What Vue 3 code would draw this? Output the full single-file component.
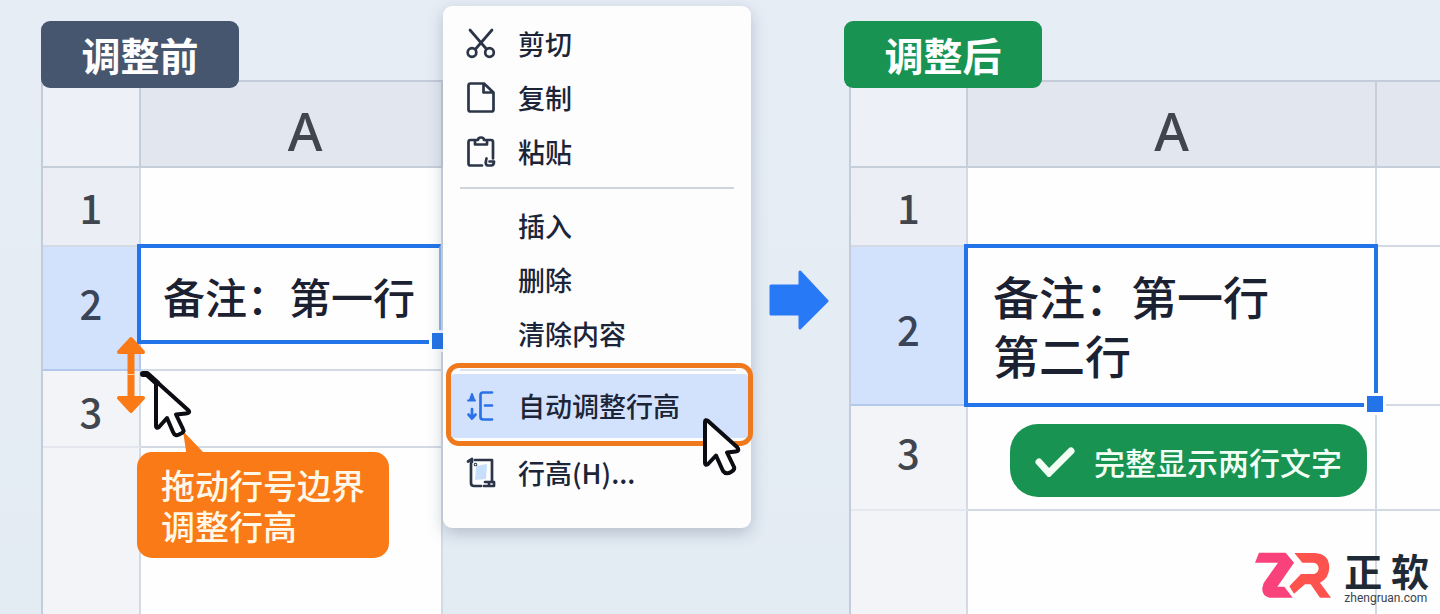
<script setup>
const editItems = [
  { label: '剪切', icon: 'cut' },
  { label: '复制', icon: 'copy' },
  { label: '粘贴', icon: 'paste' },
]
const cellItems = ['插入', '删除', '清除内容']
</script>

<template>
  <main class="board">
    <section class="pane">
      <h2 class="tag tag-before">调整前</h2>
      <table class="sheet sheet-before">
        <colgroup>
          <col class="col-num" />
          <col />
        </colgroup>
        <thead>
          <tr>
            <td class="corner"></td>
            <th scope="col">A</th>
          </tr>
        </thead>
        <tbody>
          <tr class="row-1">
            <th scope="row">1</th>
            <td></td>
          </tr>
          <tr class="row-2">
            <th scope="row">2</th>
            <td class="active">
              <div class="selection">备注：第一行<i class="handle"></i></div>
            </td>
          </tr>
          <tr class="row-3">
            <th scope="row">3</th>
            <td></td>
          </tr>
          <tr class="row-rest">
            <th></th>
            <td></td>
          </tr>
        </tbody>
      </table>
      <svg class="resize" viewBox="0 0 30 78" aria-hidden="true">
        <path d="M15 3 27 16H3ZM15 75 27 62H3Z" fill="#f97a16" stroke="#f97a16" stroke-width="4" stroke-linejoin="round" />
        <path d="M15 14V64" stroke="#f97a16" stroke-width="7" />
        <path d="M11 38.500H19" stroke="#fbd0a8" stroke-width="1" />
      </svg>
      <p class="hint">
        <svg class="hint-tail" viewBox="0 0 24 24" aria-hidden="true">
          <path d="M1 0 21 21V24H4V20Z" fill="#f97a16" />
        </svg>
        拖动行号边界<br />调整行高
      </p>
      <svg class="pointer-drag" viewBox="0 0 54 70" aria-hidden="true">
        <path d="M17 15V57Q17 60 20 58L28 49 34 63Q36 68 41 65 46 63 44 60L37 45.500 47 44.500Q52 44 49 41L19 14Z" fill="#fff" stroke="#0b0d12" stroke-width="4" stroke-linejoin="round" />
        <path d="M4 5 8 5 18 14" fill="none" stroke="#0b0d12" stroke-width="6" stroke-linejoin="round" stroke-linecap="round" />
      </svg>
    </section>

    <nav class="menu" aria-label="单元格菜单">
      <button v-for="item in editItems" :key="item.label" type="button" class="item">
        <svg v-if="item.icon === 'cut'" class="icon" viewBox="0 0 30 32" aria-hidden="true">
          <path d="M4 2 20 20.500M26 2 10 20.500" />
          <circle cx="6" cy="24.500" r="4.300" />
          <circle cx="23.500" cy="24.500" r="4.300" />
        </svg>
        <svg v-else-if="item.icon === 'copy'" class="icon" viewBox="0 0 30 32" aria-hidden="true">
          <path d="M4.500 1.500H18L27.500 10.500V27.500Q27.500 29.500 25.500 29.500H4.500Q2.500 29.500 2.500 27.500V3.500Q2.500 1.500 4.500 1.500ZM17.500 2V10.500H27" />
        </svg>
        <svg v-else class="icon" viewBox="0 0 30 32" aria-hidden="true">
          <path d="M9 4H4.500Q2.500 4 2.500 6V27.500Q2.500 29.500 4.500 29.500H16M21 4H25Q27 4 27 6V22.500M20.500 22.500Q18.500 29.500 22 29.500H25.500Q28 29 28 25.500H23.500M9 4V8.500H21V4H18Q18 1.500 15 1.500T12 4Z" />
        </svg>
        <span>{{ item.label }}</span>
      </button>
      <hr class="rule rule-top" />
      <button v-for="label in cellItems" :key="label" type="button" class="item">
        <span class="icon"></span>
        <span>{{ label }}</span>
      </button>
      <div class="focus">
        <hr class="rule rule-focus" />
        <button type="button" class="item item-on">
          <svg class="icon icon-blue" viewBox="0 0 30 32" aria-hidden="true">
            <path d="M26 2.500H17Q14.500 2.500 14.500 5V27Q14.500 29.500 17 29.500H26M19 15.500H26M6 19V28M2.500 24.500 6 28.500 9.500 24.500" />
            <path d="M6 4 8 9.500H4ZM2 10.500H9" fill="#2a72e8" stroke-width="2" />
          </svg>
          <span>自动调整行高</span>
        </button>
      </div>
      <button type="button" class="item item-last">
        <svg class="icon" viewBox="0 0 30 32" aria-hidden="true">
          <path d="M10 9 21 7 20 22 9 23Z" fill="#c7dffc" stroke="none" />
          <path d="M2 4.500 6 2V5M9 3H26V25M5 6V26Q5 29 8 29H15M19 25H28V29H18M23 25V29" />
          <circle cx="9.500" cy="7.500" r="0.500" />
        </svg>
        <span>行高(H)...</span>
      </button>
      <svg class="pointer-menu" viewBox="0 0 40 60" aria-hidden="true">
        <path d="M3 4V45Q3 48 6 46L14 37.500 21 53Q24 57 29 54 33 52 32 49L25 34.500 34 33.500Q38 33 35 29L6 3Q3 1 3 4Z" fill="#fff" stroke="#0b0d12" stroke-width="4" stroke-linejoin="round" />
      </svg>
    </nav>

    <div class="between">
      <svg class="arrow" viewBox="0 0 60 60" aria-hidden="true">
        <path d="M2 16H31V2L58 31 31 58V44H2Z" fill="#2879f6" stroke="#2879f6" stroke-width="3" stroke-linejoin="round" />
      </svg>
    </div>

    <section class="pane">
      <h2 class="tag tag-after">调整后</h2>
      <table class="sheet sheet-after">
        <colgroup>
          <col class="col-num" />
          <col class="col-a" />
          <col />
        </colgroup>
        <thead>
          <tr>
            <td class="corner"></td>
            <th scope="col">A</th>
            <th></th>
          </tr>
        </thead>
        <tbody>
          <tr class="row-1">
            <th scope="row">1</th>
            <td></td>
            <td></td>
          </tr>
          <tr class="row-2">
            <th scope="row">2</th>
            <td class="active">
              <div class="selection">备注：第一行<br />第二行<i class="handle"></i></div>
            </td>
            <td></td>
          </tr>
          <tr class="row-3">
            <th scope="row">3</th>
            <td class="active">
              <p class="done">
                <svg class="check" viewBox="0 0 40 30" aria-hidden="true">
                  <path d="M4 15 14 26 36 4" fill="none" stroke="#f2fff5" stroke-width="7" stroke-linecap="round" />
                </svg>
                完整显示两行文字
              </p>
            </td>
            <td></td>
          </tr>
          <tr class="row-rest">
            <th></th>
            <td></td>
            <td></td>
          </tr>
        </tbody>
      </table>
      <footer class="brand">
        <svg class="brand-mark" viewBox="0 0 228 138" aria-hidden="true">
          <path d="M12 2H92L117 32 67 104H88L113 137H44Q20 132 22 108L26 93 69 32H0Z" fill="#f9427b" />
          <path d="M118 3H180Q222 6 223 46 222 80 195 92L228 137H195L167 97H150L117 125 103 103 138 66H178Q191 62 191 48 189 33 175 32H142Z" fill="#fd524d" />
        </svg>
        <div>
          <strong>正 软</strong>
          <small>zhengruan.com</small>
        </div>
      </footer>
    </section>
  </main>
</template>

<style>
body {
  margin: 0;
  background: #e5ecf4;
}
</style>

<style scoped>
.board {
  display: grid;
  grid-template-columns: minmax(0, 402fr) 308px minmax(0, 98fr) minmax(0, 591fr);
  box-sizing: border-box;
  min-height: 100vh;
  padding-left: 41px;
  overflow: hidden;
  background: linear-gradient(180deg, #e6edf5, #e3ebf3);
  color: #1b2130;
  font-family: "Noto Sans CJK SC", "Noto Sans", sans-serif;
}

.pane {
  position: relative;
  padding-top: 80px;
}

.tag {
  position: absolute;
  top: 21px;
  left: 0;
  z-index: 2;
  box-sizing: border-box;
  width: 198px;
  margin: 0;
  border-radius: 9px;
  color: #fff;
  font-size: 39px;
  font-weight: 700;
  line-height: 67px;
  text-align: center;
}

.tag-before {
  background: #45566e;
}

.tag-after {
  left: -5px;
  background: #189351;
}

.sheet {
  width: 100%;
  height: calc(100vh - 80px);
  border-spacing: 0;
  border-top: 2px solid #c3ccd8;
  border-left: 2px solid #c3ccda;
  table-layout: fixed;
}

.sheet th,
.sheet td {
  box-sizing: border-box;
  padding: 0;
  border-right: 2px solid #d3dae3;
  border-bottom: 2px solid #d3dae3;
  background: #fefefe;
}

.sheet th {
  color: #41454e;
  font-size: 40px;
  font-weight: 500;
  line-height: 1;
}

.sheet thead th {
  height: 86px;
  padding-top: 12px;
  border-color: #c6ced9;
  background: #e2e7ef;
  font-family: "Noto Sans", sans-serif;
  font-size: 53px;
}

.sheet .corner {
  border-color: #c6ced9;
  background: #edf0f6;
}

.sheet-before thead th {
  padding-left: 28px;
}

.sheet-after th:last-child,
.sheet-after td:last-child {
  border-right: 0;
}

.sheet .row-1 th {
  height: 79px;
  background: #ebeef5;
}

.sheet .row-2 th {
  border-color: #b4c8ec;
  background: #d3e2fc;
  color: #3a4458;
}

.sheet .row-3 th,
.sheet .row-rest th {
  border-bottom-color: #e4e8ee;
  background: #f3f4f7;
}

.sheet-before .col-num {
  width: 98px;
}

.sheet-before .row-2 {
  height: 124px;
}

.sheet-before .row-2 th {
  padding-bottom: 10px;
}

.sheet-before .row-3 {
  height: 77px;
}

.sheet-before .row-3 th {
  padding-top: 4px;
}

.sheet-after .col-num {
  width: 117px;
}

.sheet-after .col-a {
  width: 409px;
}

.sheet-after .row-2 {
  height: 159px;
}

.sheet-after .row-2 th {
  padding-top: 6px;
}

.sheet-after .row-3 {
  height: 105px;
}

.sheet-after .row-3 th {
  padding-bottom: 12px;
}

.sheet .row-rest th,
.sheet .row-rest td {
  border-bottom: 0;
}

.active {
  position: relative;
}

.selection {
  position: absolute;
  inset: -3px 0 auto -4px;
  z-index: 1;
  box-sizing: border-box;
  height: 100px;
  padding: 0 22px;
  border: 4px solid #2374e8;
  border-right: 2px solid #8fb4f0;
  background: #fefefe;
  font-size: 42px;
  font-weight: 500;
  line-height: 96px;
  white-space: nowrap;
}

.sheet-after .selection {
  right: -3px;
  height: 163px;
  padding: 18px 25px;
  border-right: 4px solid #2374e8;
  font-size: 46px;
  line-height: 59px;
}

.handle {
  position: absolute;
  right: -12px;
  bottom: -12px;
  width: 16px;
  height: 16px;
  border: 3px solid #fefefe;
  background: #2374e8;
}

.resize {
  position: absolute;
  top: 336px;
  left: 75px;
  z-index: 2;
  width: 30px;
  height: 78px;
}

.hint {
  position: absolute;
  top: 452px;
  left: 96px;
  z-index: 2;
  box-sizing: border-box;
  width: 252px;
  margin: 0;
  padding: 12px 24px 12px;
  border-radius: 15px;
  background: #f97a16;
  color: #fff8e8;
  font-size: 34px;
  font-weight: 500;
  line-height: 41px;
  white-space: nowrap;
}

.hint-tail {
  position: absolute;
  top: -21px;
  left: 45px;
  width: 24px;
  height: 24px;
}

.pointer-drag {
  position: absolute;
  top: 369px;
  left: 98px;
  z-index: 3;
  width: 54px;
  height: 70px;
}

.menu {
  position: relative;
  z-index: 4;
  align-self: start;
  box-sizing: border-box;
  margin-top: 6px;
  padding: 12px 0 27px;
  border-radius: 9px;
  background: #fdfdfe;
  box-shadow: 0 5px 16px rgba(70, 90, 115, 0.3);
}

.item {
  display: flex;
  align-items: center;
  gap: 22px;
  width: 100%;
  height: 54px;
  padding: 0 23px 2px;
  border: 0;
  background: none;
  color: #1c2538;
  font: 500 27px/52px "Noto Sans CJK SC", "Noto Sans", sans-serif;
  text-align: left;
  white-space: nowrap;
}

.icon {
  flex: none;
  width: 30px;
  height: 32px;
  fill: none;
  stroke: #2b3547;
  stroke-width: 2.700;
  stroke-linecap: round;
  stroke-linejoin: round;
}

.icon-blue {
  stroke: #2a72e8;
}

.rule {
  height: 2px;
  margin: 7px 17px 11px;
  border: 0;
  background: #ced5dd;
}

.focus {
  box-sizing: border-box;
  margin: 1px -2px 1px 3px;
  padding-bottom: 3px;
  border: 5px solid #ee7a1d;
  border-radius: 13px;
  background: #fdfdfe;
}

.rule-focus {
  margin: 1px 12px 3px 9px;
  background: #dde2ea;
}

.item-on {
  height: 64px;
  padding: 0 15px;
  border-radius: 4px;
  background: #d3e2fc;
}

.pointer-menu {
  position: absolute;
  top: 412px;
  left: 259px;
  width: 40px;
  height: 60px;
}

.between {
  padding-top: 270px;
}

.arrow {
  display: block;
  width: 60px;
  height: 60px;
  margin-left: 18px;
}

.done {
  position: absolute;
  top: 18px;
  left: 42px;
  display: flex;
  align-items: center;
  gap: 19px;
  box-sizing: border-box;
  width: 357px;
  height: 73px;
  margin: 0;
  padding: 2px 22px 0 25px;
  border-radius: 28px;
  background: #189351;
  color: #f2fff5;
  font-size: 31px;
  font-weight: 500;
  line-height: 71px;
  white-space: nowrap;
}

.check {
  width: 40px;
  height: 30px;
}

.brand {
  position: absolute;
  right: 11px;
  bottom: 9px;
  z-index: 2;
  display: flex;
  align-items: center;
  gap: 13px;
}

.brand-mark {
  width: 76px;
  height: 46px;
  margin-bottom: 4px;
}

.brand strong,
.brand small {
  display: block;
  white-space: nowrap;
}

.brand strong {
  color: #1f2a37;
  font-size: 38px;
  font-weight: 700;
  line-height: 42px;
}

.brand small {
  color: #3c434c;
  font: 12px/14px Roboto, "Liberation Sans", sans-serif;
}
</style>
